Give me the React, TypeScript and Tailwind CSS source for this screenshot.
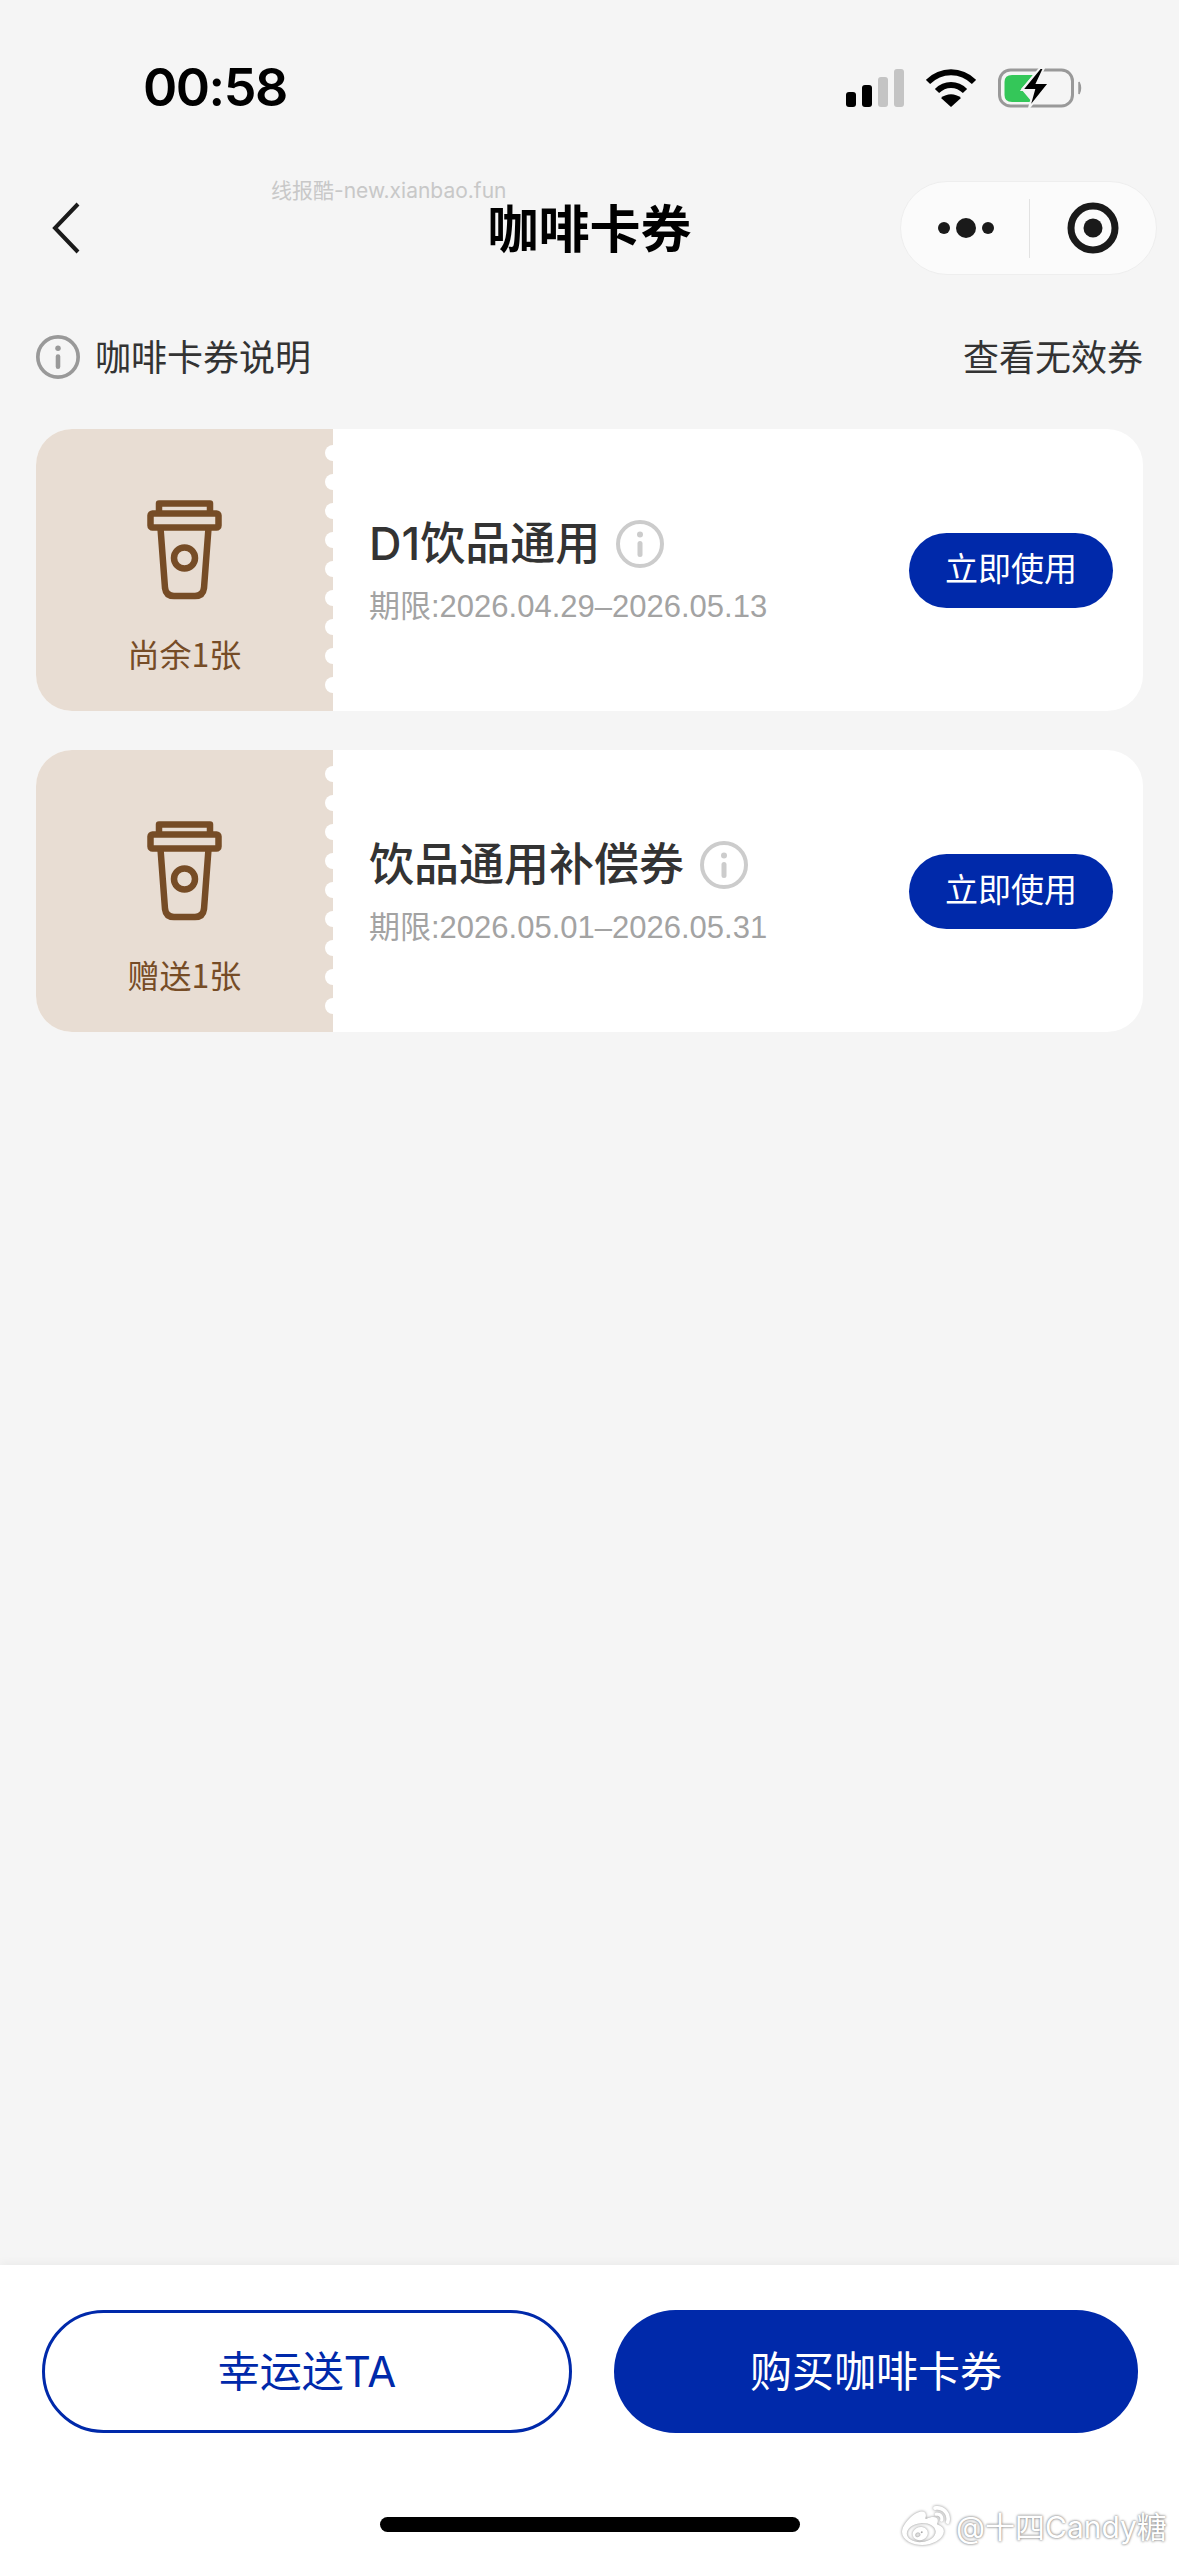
import { FaWeibo } from 'react-icons/fa';

const CJK = '"Noto Sans CJK SC", sans-serif';
const LATIN = 'Inter, "Noto Sans CJK SC", sans-serif';

function InfoIcon({ size, color, width }: { size: number; color: string; width: number }) {
  return (
    <svg width={size} height={size} viewBox="0 0 48 48" className="shrink-0">
      <circle cx="24" cy="24" r={24 - width / 2} fill="none" stroke={color} strokeWidth={width} />
      <circle cx="24" cy="14.5" r="3" fill={color} />
      <rect x="21.5" y="21" width="5" height="16" rx="2.5" fill={color} />
    </svg>
  );
}

function CupIcon() {
  return (
    <svg width="75" height="100" viewBox="0 0 75 100" fill="none" stroke="#764c26" strokeWidth="6.500" strokeLinejoin="round">
      <path d="M12 12 V3.500 H63 V12" />
      <rect x="3.500" y="13.500" width="68" height="14" rx="2" />
      <path d="M13.500 28 L18 88 Q19 96 27 96 H48 Q56 96 57 88 L61.500 28" />
      <circle cx="37.500" cy="58" r="10.500" />
    </svg>
  );
}

function StatusIcons() {
  return (
    <div className="flex items-center">
      <svg width="58" height="38" viewBox="0 0 58 38">
        <rect x="0" y="23" width="10" height="15" rx="3" fill="#000" />
        <rect x="16" y="16" width="10" height="22" rx="3" fill="#000" />
        <rect x="32" y="8" width="10" height="30" rx="3" fill="#c4c4c4" />
        <rect x="48" y="0" width="10" height="38" rx="3" fill="#c4c4c4" />
      </svg>
      <svg width="50" height="38" viewBox="0 0 50 38" className="ml-[22px]">
        <path d="M2 13 C15 0 35 0 48 13" fill="none" stroke="#000" strokeWidth="6" />
        <path d="M11 22 C19 14 31 14 39 22" fill="none" stroke="#000" strokeWidth="6" />
        <path d="M25 38 L15 29 C21 24 29 24 35 29 Z" fill="#000" />
      </svg>
      <svg width="84" height="40" viewBox="0 0 84 40" className="ml-[22px]">
        <rect x="1.500" y="2" width="73" height="36" rx="11" fill="none" stroke="#999" strokeWidth="3" />
        <path d="M81 14 Q84 20 81 26 Z" fill="#999" stroke="#999" strokeWidth="1.500" />
        <path d="M14 7 H35 L23 21 L34 34 H14 Q6.500 34 6.500 27 V14 Q6.500 7 14 7 Z" fill="#34c759" />
        <path d="M42 0 L24 22 H36 L31 40 L51 15 H39 L46 0 Z" fill="#000" stroke="#f5f5f5" strokeWidth="2" />
      </svg>
    </div>
  );
}

function Coupon({ note, title, date }: { note: string; title: string; date: string }) {
  return (
    <div className="flex h-[282px] overflow-hidden rounded-[36px] bg-white">
      <div className="relative flex w-[297px] shrink-0 flex-col items-center bg-[#e8ddd3] pt-[71px]">
        <CupIcon />
        <div className="mt-[29px] text-[32px] leading-[48px] text-[#764c26]" style={{ fontFamily: CJK }}>
          {note}
        </div>
        {/* 票券の切り取り線 */}
        <div className="absolute top-[16px] right-[-8px] flex flex-col gap-[13px]">
          {Array.from({ length: 9 }).map((_, i) => (
            <div key={i} className="h-[16px] w-[16px] rounded-full bg-white" />
          ))}
        </div>
      </div>
      <div className="flex flex-1 items-center justify-between pr-[30px] pl-[36px]">
        <div>
          <div className="flex h-[60px] items-center gap-[16px] pt-[2px]">
            <span className="text-[45px] leading-[60px] font-medium text-[#333333]" style={{ fontFamily: LATIN }}>
              {title}
            </span>
            <InfoIcon size={48} color="#cccccc" width={4} />
          </div>
          <div
            className="mt-[14px] h-[40px] text-[31px] leading-[40px] text-[#a3a3a3]"
            style={{ fontFamily: '"Liberation Sans", "Noto Sans CJK SC", sans-serif' }}
          >
            {date}
          </div>
        </div>
        <button
          className="flex h-[75px] w-[204px] items-center justify-center rounded-full bg-[#0029aa] pb-[5px] text-[33px] text-white"
          style={{ fontFamily: CJK }}
        >
          立即使用
        </button>
      </div>
    </div>
  );
}

export default function App() {
  return (
    <div className="relative flex h-[2556px] w-full flex-col overflow-hidden bg-[#f5f5f5]">
      {/* ステータスバー */}
      <div className="flex h-[181px] shrink-0 items-start justify-between pt-[61px] pr-[97px] pl-[143px]">
        <span className="text-[52px] leading-[54px] font-semibold tracking-[-1.5px] text-black" style={{ fontFamily: 'Inter, sans-serif' }}>
          00:58
        </span>
        <div className="pt-[7px]">
          <StatusIcons />
        </div>
      </div>

      {/* ナビ */}
      <div className="grid h-[94px] shrink-0 grid-cols-[300px_1fr_300px] items-center">
        <div className="pl-[52px]">
          <svg width="28" height="52" viewBox="0 0 28 52" fill="none" stroke="#1a1a1a" strokeWidth="4">
            <path d="M26 2 L3 26 L26 50" />
          </svg>
        </div>
        <h1 className="pb-[5px] text-center text-[51px] leading-[60px] font-bold text-black" style={{ fontFamily: CJK }}>
          咖啡卡券
        </h1>
        <div className="flex justify-end pr-[22px]">
          <div className="flex h-[94px] w-[257px] items-center rounded-full border border-[#eeeeee] bg-[#fbfbfb]">
            <div className="flex w-[128px] justify-center pl-[2px]">
              <svg width="56" height="22" viewBox="0 0 56 22" fill="#1a1a1a">
                <circle cx="6" cy="11" r="6" />
                <circle cx="28" cy="11" r="10" />
                <circle cx="50" cy="11" r="6" />
              </svg>
            </div>
            <div className="h-[59px] w-px bg-[#e2e2e2]" />
            <div className="flex flex-1 justify-center">
              <svg width="52" height="52" viewBox="0 0 52 52">
                <circle cx="26" cy="26" r="22" fill="none" stroke="#1a1a1a" strokeWidth="7" />
                <circle cx="26" cy="26" r="9.500" fill="#1a1a1a" />
              </svg>
            </div>
          </div>
        </div>
      </div>

      {/* 説明 */}
      <div className="mt-[57px] flex h-[50px] shrink-0 items-center justify-between px-[36px]" style={{ fontFamily: CJK }}>
        <div className="flex items-center gap-[15px]">
          <InfoIcon size={44} color="#999999" width={4} />
          <span className="pb-[5px] text-[36px] leading-[50px] text-[#333333]">咖啡卡券说明</span>
        </div>
        <span className="pb-[5px] text-[36px] leading-[50px] text-[#333333]">查看无效券</span>
      </div>

      {/* カード一覧 */}
      <div className="mt-[47px] flex flex-col gap-[39px] px-[36px]">
        <Coupon note="尚余1张" title="D1饮品通用" date="期限:2026.04.29–2026.05.13" />
        <Coupon note="赠送1张" title="饮品通用补偿券" date="期限:2026.05.01–2026.05.31" />
      </div>

      <div className="flex-1" />

      {/* フッター */}
      <div className="h-[291px] shrink-0 bg-white pt-[45px] shadow-[0_-3px_8px_rgba(0,0,0,0.04)]">
        <div className="flex pr-[41px] pl-[42px]" style={{ fontFamily: LATIN }}>
          <button className="flex h-[123px] w-[530px] items-center justify-center rounded-full border-[3px] border-[#0029aa] text-[42px] text-[#0029aa]">
            幸运送TA
          </button>
          <button className="ml-[42px] flex h-[123px] flex-1 items-center justify-center rounded-full bg-[#0029aa] text-[42px] text-white">
            购买咖啡卡券
          </button>
        </div>
        <div className="mt-[84px] flex justify-center">
          <div className="ml-[1px] h-[15px] w-[420px] rounded-full bg-black" />
        </div>
      </div>

      {/* 透かし */}
      <div className="absolute top-[179px] left-[271px] text-[21px] leading-[24px] text-[#c8c8c8]" style={{ fontFamily: LATIN }}>
        线报酷-new.xianbao.fun
      </div>
      <div className="absolute top-[2503px] left-[902px] flex items-center gap-[6px]">
        <FaWeibo className="text-[48px] text-white" style={{ filter: 'drop-shadow(0 0 1.500px #8a8a8a)' }} />
        <span
          className="text-[30px] leading-[44px] whitespace-nowrap text-white"
          style={{ fontFamily: LATIN, textShadow: '0 0 3px #8a8a8a, 0 0 2px #9a9a9a' }}
        >
          @十四Candy糖
        </span>
      </div>
    </div>
  );
}
